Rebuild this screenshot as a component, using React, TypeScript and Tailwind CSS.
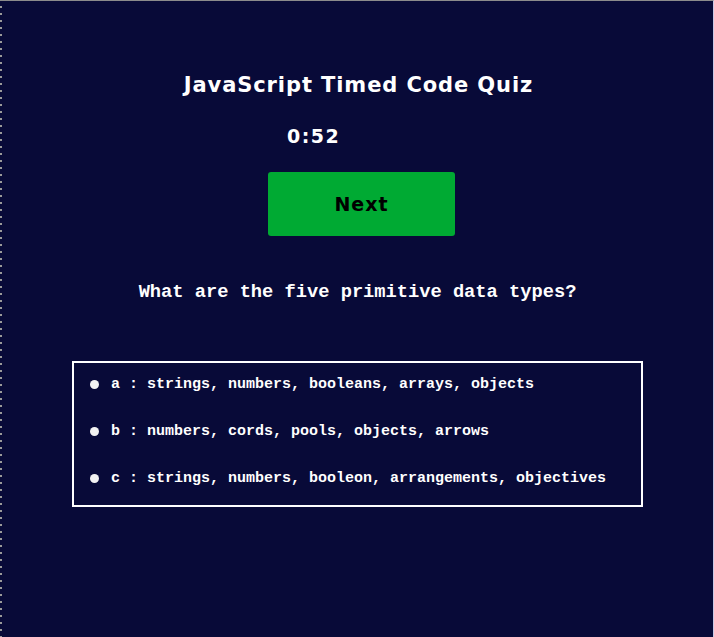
export default function App() {
  const opts = [
    "a : strings, numbers, booleans, arrays, objects",
    "b : numbers, cords, pools, objects, arrows",
    "c : strings, numbers, booleon, arrangements, objectives",
  ];
  return (
    <div className="w-[714px] h-[637px] bg-[#080a38] border-t border-t-[#8c8c8c] border-r border-r-[#c9c9e6] flex overflow-hidden">
      <div className="w-[2px] h-full bg-[repeating-linear-gradient(to_bottom,#080a38_0px,#080a38_5px,#9a9a9a_5px,#9a9a9a_7px)] shrink-0" />
      <div className="flex-1 flex flex-col items-center">
        <h1 className="mt-[71px] text-white text-[21px] font-bold leading-[26px] tracking-[0.9px] [font-family:'DejaVu_Sans',sans-serif] ml-[2px]">
          JavaScript Timed Code Quiz
        </h1>
        <div className="w-full pl-[285px] mt-[26px] text-white text-[19px] font-bold leading-[24px] tracking-[1.5px] [font-family:'DejaVu_Sans',sans-serif]">
          0:52
        </div>
        <button className="mt-[24px] ml-[8px] w-[187px] h-[64px] bg-[#00aa33] rounded-[3px] text-black text-[19px] font-bold tracking-[1px] [font-family:'DejaVu_Sans',sans-serif]">
          Next
        </button>
        <h3 className="mt-[44px] text-white text-[18.72px] font-bold leading-[24px] [font-family:'Liberation_Mono',monospace]">
          What are the five primitive data types?
        </h3>
        <div className="mt-[57px] w-[571px] h-[146px] border-2 border-white flex flex-col justify-center gap-[30px] pl-[16px] pb-[5px]">
          {opts.map((o) => (
            <div key={o} className="flex items-center h-[17px]">
              <span className="w-[9px] h-[9px] rounded-full bg-[#f2f2f2] mr-[12px]" />
              <span className="text-white text-[15px] font-bold leading-[17px] [font-family:'Liberation_Mono',monospace]">
                {o}
              </span>
            </div>
          ))}
        </div>
      </div>
    </div>
  );
}
